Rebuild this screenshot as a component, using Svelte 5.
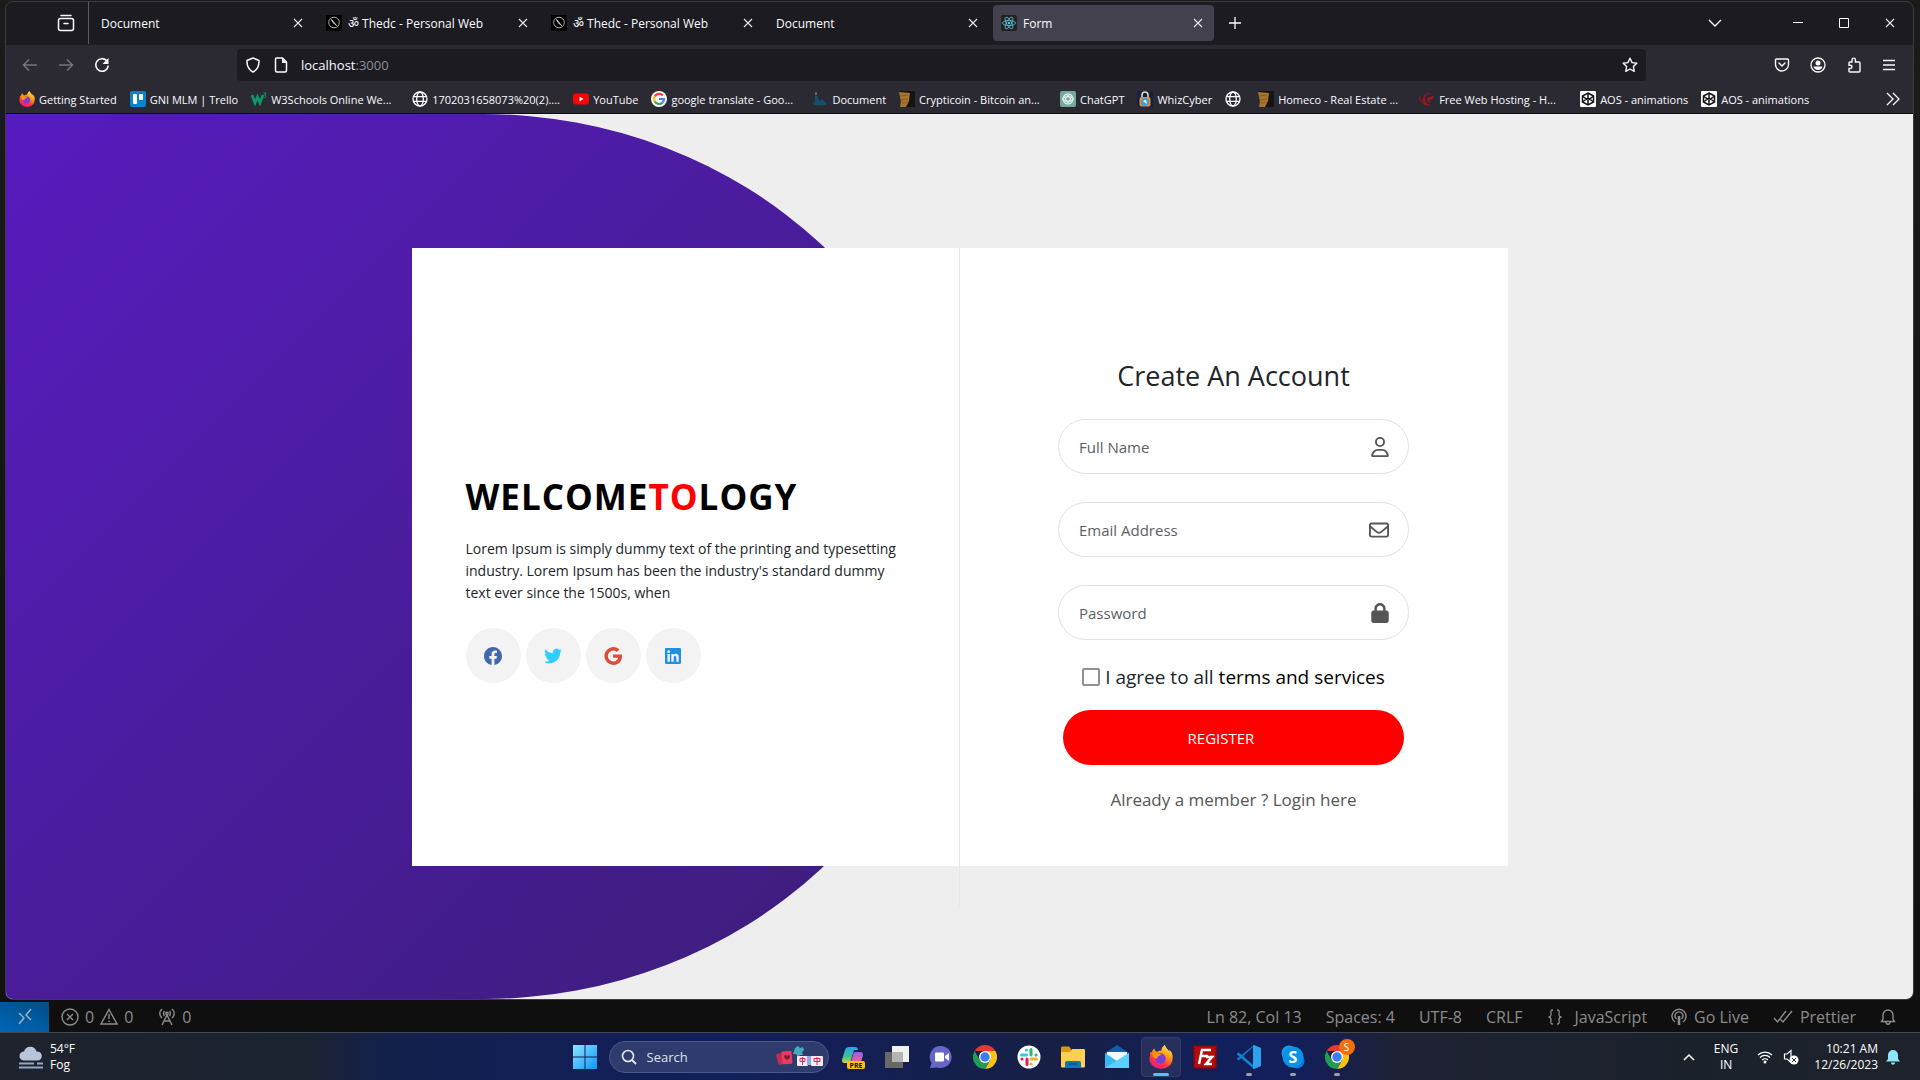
<script>
  const tabs = [
    { title: 'Document' },
    { title: 'Thedc - Personal Web', icon: 'compass', om: true },
    { title: 'Thedc - Personal Web', icon: 'compass', om: true },
    { title: 'Document' },
    { title: 'Form', icon: 'react', active: true },
  ];

  const bookmarks = [
    { label: 'Getting Started', icon: 'firefox' },
    { label: 'GNI MLM | Trello', icon: 'trello' },
    { label: 'W3Schools Online We...', icon: 'w3', long: true },
    { label: '1702031658073%20(2)....', icon: 'globe', long: true },
    { label: 'YouTube', icon: 'youtube' },
    { label: 'google translate - Goo...', icon: 'google', long: true },
    { label: 'Document', icon: 'boat' },
    { label: 'Crypticoin - Bitcoin an...', icon: 'wood', long: true },
    { label: 'ChatGPT', icon: 'gpt' },
    { label: 'WhizCyber', icon: 'padlock' },
    { label: '', icon: 'globe' },
    { label: 'Homeco - Real Estate ...', icon: 'wood', long: true },
    { label: 'Free Web Hosting - H...', icon: 'phoenix', long: true },
    { label: 'AOS - animations', icon: 'codepen' },
    { label: 'AOS - animations', icon: 'codepen' },
  ];

  const fields = [
    { id: 'name', label: 'Full Name', type: 'text', icon: 'user' },
    { id: 'email', label: 'Email Address', type: 'email', icon: 'mail' },
    { id: 'password', label: 'Password', type: 'password', icon: 'lock' },
  ];

  const socials = ['Facebook', 'Twitter', 'Google', 'LinkedIn'];

  const apps = [
    { name: 'Copilot' },
    { name: 'Task view' },
    { name: 'Teams' },
    { name: 'Chrome' },
    { name: 'Slack' },
    { name: 'Files' },
    { name: 'Mail' },
    { name: 'Firefox', active: true },
    { name: 'FileZilla' },
    { name: 'VS Code', running: true },
    { name: 'Skype', running: true },
    { name: 'Chrome S', running: true },
  ];
</script>

{#snippet firefox(size)}
  <svg width={size} height={size} viewBox="0 0 24 24" aria-hidden="true">
    <defs>
      <linearGradient id="fxg" x1="0.8" y1="0" x2="0.3" y2="1">
        <stop offset="0" stop-color="#fff44f" /><stop offset=".4" stop-color="#ff980e" /><stop offset=".7" stop-color="#ff3647" /><stop offset="1" stop-color="#e31587" />
      </linearGradient>
    </defs>
    <path fill="url(#fxg)" d="M23.4 9.500C22.800 7 20.700 5.400 19.700 4.600c.6 1 .9 2 .9 2.500C19.300 4.400 16.800 3 15.900 0c-3 1.700-3.500 4.600-3.500 5.700-2-.3-3.400.4-4.400 1C6.300 6.400 5.500 4.500 5.400 3.500 3.700 4.600 3.200 6.200 2.900 7.100 2.300 7 1.500 7.200 1 8c-.2 1.200 0 2 .2 2.500C.5 12 .4 13 .5 14a11.500 10 0 0 0 23 0c.2-1.800.2-3-.1-4.500z" />
    <circle cx="11.500" cy="13.500" r="5.200" fill="#7b3fd4" />
    <path fill="#ff980e" d="M3 8.500c3-1.800 5-.5 6.300.5l3 .3c-.3 1-2 1.700-3.300 2 0 1.500-2.200 3-3.500 1.700C4.400 12 3.500 10 3 8.500z" />
  </svg>
{/snippet}

{#snippet chrome(size)}
  <svg width={size} height={size} viewBox="0 0 24 24" aria-hidden="true">
    <path fill="#e33b2e" d="M1.600 6A12 12 0 0 1 22.400 6H12z" />
    <path fill="#fbc116" d="M22.400 6A12 12 0 0 1 12 24l5.200-9L12 6z" />
    <path fill="#1f9d55" d="M1.600 6A12 12 0 0 0 12 24l5.200-9-5.200 3-5.200-3z" />
    <circle cx="12" cy="12" r="6" fill="#fff" /><circle cx="12" cy="12" r="4.700" fill="#3b7ded" />
  </svg>
{/snippet}

{#snippet close()}
  <svg width="10" height="10" viewBox="0 0 10 10" aria-hidden="true"><path d="M1 1l8 8M9 1l-8 8" fill="none" stroke="#e8e8ee" stroke-width="1.100" /></svg>
{/snippet}

{#snippet smallIcon(name)}
  {#if name === 'firefox'}
    {@render firefox(16)}
  {:else}
    <svg width="16" height="16" viewBox="0 0 16 16" aria-hidden="true">
      {#if name === 'compass'}
        <rect width="16" height="16" fill="#000" /><circle cx="8" cy="7.500" r="5.300" fill="none" stroke="#aaa" /><path d="M5.500 4.500l5 6-3.500-3z" stroke="#ccc" fill="#ccc" />
      {:else if name === 'react'}
        <rect width="16" height="16" rx="2" fill="#222" />
        <g fill="none" stroke="#58c4dc" stroke-width=".8"><ellipse cx="8" cy="8" rx="6.500" ry="2.500" /><ellipse cx="8" cy="8" rx="6.500" ry="2.500" transform="rotate(60 8 8)" /><ellipse cx="8" cy="8" rx="6.500" ry="2.500" transform="rotate(120 8 8)" /></g>
        <circle cx="8" cy="8" r="1.300" fill="#58c4dc" />
      {:else if name === 'trello'}
        <rect width="16" height="16" rx="2" fill="#0b84d0" /><rect x="3" y="3" width="4" height="10" rx="1" fill="#fff" /><rect x="9" y="3" width="4" height="6" rx="1" fill="#fff" />
      {:else if name === 'w3'}
        <path d="M1 4l3 8L6.500 6 9 12l3-8" fill="none" stroke="#0d9c68" stroke-width="2.600" /><path d="M12.500 2h2.500l-1.500 2c2 0 2 3-.8 2.500" fill="none" stroke="#0d9c68" />
      {:else if name === 'globe'}
        <g fill="none" stroke="#fbfbfe" stroke-width="1.300"><circle cx="8" cy="8" r="7" /><ellipse cx="8" cy="8" rx="3.300" ry="7" /><path d="M1.500 5.700h13M1.500 10.300h13" /></g>
      {:else if name === 'youtube'}
        <rect y="2.500" width="16" height="11" rx="3" fill="#f00" /><path d="M6.500 5.500v5L10.500 8z" fill="#fff" />
      {:else if name === 'google'}
        <circle cx="8" cy="8" r="8" fill="#fff" />
        <g fill="none" stroke-width="2.200"><path d="M11.800 4.500A5 5 0 0 0 3.700 5.500" stroke="#ea4335" /><path d="M3.700 5.500a5 5 0 0 0 0 5" stroke="#fbbc05" /><path d="M3.700 10.500a5 5 0 0 0 7.800 1.100" stroke="#34a853" /><path d="M8 8h5a5 5 0 0 1-1.500 3.600" stroke="#4285f4" /></g>
      {:else if name === 'boat'}
        <path d="M3 2l3 4 1 4 3-2 5 5c-4 2-10 2-14 0l2-3z" fill="#12526a" /><circle cx="4" cy="2.500" r="1" fill="#c28b2c" />
      {:else if name === 'wood'}
        <path d="M0 0h16v16H4z" fill="#171310" /><path d="M0 1l11 1-1 8-3 6H1l1-5z" fill="#a8752f" /><path d="M1 5l8-1M2 9l7-1M3 12l6-1" stroke="#7d5420" stroke-width=".7" />
      {:else if name === 'gpt'}
        <rect width="16" height="16" rx="2" fill="#74aa9c" />
        <g fill="none" stroke="#fff" stroke-width=".8"><circle cx="8" cy="8" r="5.200" /><ellipse cx="8" cy="8" rx="2.200" ry="5" transform="rotate(30 8 8)" /><ellipse cx="8" cy="8" rx="2.200" ry="5" transform="rotate(90 8 8)" /><ellipse cx="8" cy="8" rx="2.200" ry="5" transform="rotate(150 8 8)" /></g>
      {:else if name === 'padlock'}
        <rect width="16" height="16" fill="#14213f" /><path d="M5 7V4a3 3 0 0 1 6 0v3" fill="none" stroke="#e8d9b0" stroke-width="1.600" /><rect x="2.500" y="6" width="11" height="9.500" rx="2" fill="#ee8a2f" /><circle cx="8" cy="11" r="4" fill="#39a0dc" /><path d="M6 10l4 3-1-4z" fill="#fff" />
      {:else if name === 'phoenix'}
        <path d="M14 3C9 2 5 5 6 9c.5 3 3 5 6 5-5 2-9-1-8.500-5C4 4 9 1 14 3zM8 8c2-3 5-2 7-3-1 3-3 4-5 4l2 2c-2 1-4-1-4-3zM1 4c0 4 1 6 3 8C1 11-1 8 1 4z" fill="#a8121b" />
      {:else if name === 'codepen'}
        <rect width="16" height="16" rx="1" fill="#fff" />
        <g fill="none" stroke="#111" stroke-width="1.500"><path d="M8 2l5.500 3v6L8 14l-5.500-3V5z" /><path d="M3 5.500l5 3.500 5-3.500M3 10.500L8 7l5 3.500M8 2v5M8 9v5" /></g>
      {/if}
    </svg>
  {/if}
{/snippet}

{#snippet fieldIcon(name)}
  {#if name === 'user'}
    <svg width="18" height="20" viewBox="0 0 448 512" aria-hidden="true"><path fill="#555" d="M304 128a80 80 0 1 0-160 0 80 80 0 1 0 160 0zm-208 0a128 128 0 1 1 256 0 128 128 0 1 1-256 0zM49.300 464h349.500c-8.900-63.300-63.300-112-129-112h-91.400c-65.700 0-120.100 48.700-129 112zM0 482.300C0 383.800 79.800 304 178.300 304h91.400C368.200 304 448 383.800 448 482.300c0 16.400-13.300 29.700-29.700 29.700H29.700C13.300 512 0 498.700 0 482.300z" /></svg>
  {:else if name === 'mail'}
    <svg width="20" height="20" viewBox="0 0 512 512" aria-hidden="true"><path fill="#555" d="M64 112c-8.800 0-16 7.200-16 16v22.100l172.500 141.600c20.700 17 50.400 17 71.100 0L464 150.100V128c0-8.800-7.200-16-16-16H64zM48 212.200V384c0 8.800 7.200 16 16 16h384c8.800 0 16-7.200 16-16V212.200L322 328.800c-38.400 31.500-93.700 31.500-132 0L48 212.200zM0 128c0-35.300 28.700-64 64-64h384c35.300 0 64 28.700 64 64v256c0 35.300-28.700 64-64 64H64c-35.300 0-64-28.700-64-64V128z" /></svg>
  {:else}
    <svg width="18" height="20" viewBox="0 0 448 512" aria-hidden="true"><path fill="#555" d="M144 144v48h160v-48c0-44.200-35.800-80-80-80s-80 35.800-80 80zM80 192v-48C80 64.500 144.500 0 224 0s144 64.500 144 144v48h16c35.300 0 64 28.700 64 64v192c0 35.300-28.700 64-64 64H64c-35.300 0-64-28.700-64-64V256c0-35.300 28.700-64 64-64h16z" /></svg>
  {/if}
{/snippet}

{#snippet socialIcon(name)}
  {#if name === 'Facebook'}
    <svg width="18" height="18" viewBox="0 0 24 24" aria-hidden="true"><path fill="#4267b2" d="M24 12.070C24 5.400 18.600 0 12 0S0 5.400 0 12.070C0 18.100 4.400 23.100 10.100 24v-8.400H7.100v-3.500h3V9.400c0-3 1.800-4.700 4.500-4.700 1.300 0 2.700.2 2.700.2v3h-1.500c-1.500 0-2 .9-2 1.900v2.300h3.400l-.5 3.500h-2.800V24C19.600 23.100 24 18.100 24 12.070z" /></svg>
  {:else if name === 'Twitter'}
    <svg width="18" height="18" viewBox="0 0 24 24" aria-hidden="true"><path fill="#33ccff" d="M24 4.600c-.9.400-1.800.7-2.800.8 1-.6 1.800-1.600 2.200-2.700-1 .6-2 1-3.100 1.200A4.900 4.900 0 0 0 11.900 8.400C7.700 8.100 4.100 6.100 1.700 3.100c-1.300 2.200-.7 5.100 1.500 6.600-.8 0-1.600-.2-2.200-.6-.1 2.300 1.600 4.400 3.900 4.900-.7.200-1.500.2-2.200.1.600 2 2.400 3.400 4.600 3.400A9.900 9.900 0 0 1 0 19.500 14 14 0 0 0 7.500 21.700c9.100 0 14.300-7.700 14-14.600 1-.7 1.800-1.600 2.500-2.500z" /></svg>
  {:else if name === 'Google'}
    <svg width="18" height="18" viewBox="0 0 24 24" aria-hidden="true"><path fill="#dd4b39" d="M12.200 10.100h11.500c.2.800.3 1.500.3 2.300 0 6.900-4.600 11.600-11.500 11.600A12 12 0 1 1 12.500 0c3.200 0 6 1.200 8.100 3.200l-3.700 3.500c-1-1-2.600-1.900-4.600-1.900a7.200 7.200 0 0 0 0 14.400c4 0 6.200-2.500 6.600-5h-6.700z" /></svg>
  {:else}
    <svg width="16" height="18" viewBox="0 0 448 448" aria-hidden="true"><path fill="#2090e0" d="M416 0H32C14 0 0 15 0 32v384c0 18 14 32 32 32h384c18 0 32-14 32-32V32c0-17-14-32-32-32zM135 384H69V170h66zM102 141a38 38 0 1 1 0-77 38 38 0 0 1 0 77zM384 384h-66V280c0-25-1-57-35-57s-40 27-40 55v106h-66V170h64v29h1c9-17 30-35 63-35 67 0 79 45 79 102z" /></svg>
  {/if}
{/snippet}

{#snippet appIcon(name)}
  {#if name === 'Firefox'}
    {@render firefox(24)}
  {:else if name === 'Chrome' || name === 'Chrome S'}
    {@render chrome(24)}
  {:else}
    <svg width="24" height="24" viewBox="0 0 24 24" aria-hidden="true">
      {#if name === 'Copilot'}
        <defs>
          <linearGradient id="cpa" x1="0" y1="0" x2="0" y2="1"><stop offset="0" stop-color="#2aa5f2" /><stop offset=".6" stop-color="#3dc08c" /><stop offset="1" stop-color="#d8d33c" /></linearGradient>
          <linearGradient id="cpb" x1="0" y1="0" x2="0" y2="1"><stop offset="0" stop-color="#9c5cf0" /><stop offset="1" stop-color="#f0608a" /></linearGradient>
        </defs>
        <path d="M8 2h6c2 0 2.500 1 3 3l-4 0-3 10c-.6 2-1.500 3-3.500 3H4c-3 0-3.500-2-2.500-5L4 5c.7-2 2-3 4-3z" fill="url(#cpa)" />
        <path d="M14 7h5c3 0 3.500 2 2.500 5l-1.500 5H10l2-7c.4-2 1-3 2-3z" fill="url(#cpb)" />
        <rect x="6" y="16" width="18" height="8" rx="2" fill="#ffc20e" /><text x="15" y="22.500" text-anchor="middle" font-size="7" font-weight="700" fill="#111">PRE</text>
      {:else if name === 'Task view'}
        <rect x="7" y="1" width="17" height="16" fill="#f1f1f1" /><rect y="7" width="18" height="16" fill="#686868" /><rect x="7" y="7" width="11" height="10" fill="#b4b4b4" />
      {:else if name === 'Teams'}
        <path d="M12.500 1a11 11 0 1 1-4 21.500L1 23l1.500-5A11 11 0 0 1 12.500 1z" fill="#6566c8" /><rect x="6" y="7.500" width="9" height="9" rx="1" fill="#fff" /><path d="M16 11l4-3v8l-4-3z" fill="#fff" />
      {:else if name === 'Slack'}
        <circle cx="12" cy="12" r="11.500" fill="#fff" />
        <g stroke-width="3" stroke-linecap="round"><path d="M9.500 5v.1M4.500 10H9.500" stroke="#36c5f0" /><path d="M14 4.500V10M19 10h.1" stroke="#2eb67d" /><path d="M14 14h5.500M14 19v.1" stroke="#ecb22e" /><path d="M10 14v5.500M5 14h.1" stroke="#e01e5a" /></g>
      {:else if name === 'Files'}
        <path d="M0 3c0-1 .5-1.500 1.500-1.500H8l2 2.500v4H0z" fill="#d99a0b" /><path d="M0 7h9l2-3h11.500c1 0 1.500.5 1.500 1.500V21c0 1-.5 1.500-1.500 1.500h-21C.5 22.500 0 22 0 21z" fill="#fdd155" /><path d="M4 23v-5c0-1.500 1-2 2-2h12c1 0 2 .5 2 2v5z" fill="#1673ba" /><path d="M8 19h8" stroke="#0b4c86" stroke-width="1.500" />
      {:else if name === 'Mail'}
        <path d="M0 8L12 0l12 8v15H0z" fill="#0f5faf" /><path d="M2 7h20v9H2z" fill="#f3f7fb" /><path d="M0 8l12 8L24 8v15H0z" fill="#38b9f2" /><path d="M0 23l24-15v15z" fill="#5bd0fa" />
      {:else if name === 'FileZilla'}
        <rect x="1" y="1" width="22" height="22" fill="#b30c0c" stroke="#8d0505" stroke-width="2" stroke-dasharray="2 1" /><path d="M6 19l3-14h9M8 11h7M13 12h6l-6 7h6" fill="none" stroke="#fff" stroke-width="2.500" />
      {:else if name === 'VS Code'}
        <path d="M17 1L4.500 13 1.500 15.500 0 14.500v-1L17 0z" fill="#1277be" /><path d="M0 8.500l1.500-1L5 10l12 11v3L0 9.500z" fill="#0f86d2" /><path d="M17 0l6 2.500c.7.300 1 .8 1 1.500v16c0 .7-.3 1.200-1 1.500L17 24c-1 0-1-.5-1-1V1c0-.5 0-1 1-1z" fill="#2ca2ee" />
      {:else if name === 'Skype'}
        <circle cx="8" cy="8" r="7.500" fill="#1b9bea" /><circle cx="16" cy="16" r="7.500" fill="#0a78d4" /><circle cx="12" cy="12" r="10.500" fill="#0a93e6" /><text x="12" y="18" text-anchor="middle" font-size="16" font-weight="700" fill="#fff">S</text>
      {/if}
    </svg>
  {/if}
{/snippet}

<div class="desktop">
  <div class="window">
    <div class="tabbar">
      <button class="archive" aria-label="Recent browsing">
        <svg width="18" height="18" viewBox="0 0 18 18" aria-hidden="true"><g fill="none" stroke="#fbfbfe" stroke-width="1.500" stroke-linecap="round"><path d="M4 1.500h10" /><rect x="1.500" y="4.500" width="15" height="12" rx="2" /><path d="M7 9.500h4" /></g></svg>
      </button>
      <div class="tabs">
        {#each tabs as tab}
          <div class="tab" class:active={tab.active}>
            {#if tab.icon}{@render smallIcon(tab.icon)}{/if}
            <span class="tab-title">{tab.om ? 'ॐ ' : ''}{tab.title}</span>
            <button aria-label="Close tab">{@render close()}</button>
          </div>
        {/each}
      </div>
      <button class="plus" aria-label="New tab"><svg width="14" height="14" viewBox="0 0 14 14" aria-hidden="true"><path d="M7 1v12M1 7h12" stroke="#fbfbfe" stroke-width="1.300" /></svg></button>
      <div class="window-controls">
        <button class="list" aria-label="List tabs"><svg width="14" height="10" viewBox="0 0 14 10" aria-hidden="true"><path d="M1 2l6 6 6-6" fill="none" stroke="#fbfbfe" stroke-width="1.400" /></svg></button>
        <button aria-label="Minimize"><svg width="10" height="10" viewBox="0 0 10 10" aria-hidden="true"><path d="M0 4.500h10" stroke="#fff" /></svg></button>
        <button aria-label="Maximize"><svg width="10" height="10" viewBox="0 0 10 10" aria-hidden="true"><path d="M.5.5h9v9h-9z" fill="none" stroke="#fff" /></svg></button>
        <button aria-label="Close window">{@render close()}</button>
      </div>
    </div>

    <div class="navbar">
      <div class="nav-buttons">
        <button aria-label="Back"><svg width="16" height="16" viewBox="0 0 16 16" aria-hidden="true"><path d="M15 8H1.500M7 2.500L1.500 8 7 13.500" fill="none" stroke="#77767e" stroke-width="1.400" /></svg></button>
        <button aria-label="Forward"><svg width="16" height="16" viewBox="0 0 16 16" aria-hidden="true"><path d="M1 8h13.500M9 2.500L14.500 8 9 13.500" fill="none" stroke="#77767e" stroke-width="1.400" /></svg></button>
        <button aria-label="Reload"><svg width="16" height="16" viewBox="0 0 16 16" aria-hidden="true"><path d="M14.300 8.500A6.300 6.300 0 1 1 12.500 3.500" fill="none" stroke="#fbfbfe" stroke-width="1.600" /><path d="M14.500 1v6h-6z" fill="#fbfbfe" /></svg></button>
      </div>
      <div class="urlbar">
        <svg width="16" height="16" viewBox="0 0 16 16" aria-hidden="true"><path d="M8 1l6 2.500C14.200 9 12 13 8 15 4 13 1.800 9 2 3.500z" fill="none" stroke="#fbfbfe" stroke-width="1.500" stroke-linejoin="round" /></svg>
        <svg width="16" height="16" viewBox="0 0 16 16" aria-hidden="true"><path d="M3.500 1h6l4 4v8.500c0 1-.5 1.500-1.500 1.500H4c-1 0-1.500-.5-1.500-1.500V2.500c0-1 .5-1.500 1-1.500z" fill="none" stroke="#fbfbfe" stroke-width="1.500" /><path d="M9 1v5h4.500z" fill="#fbfbfe" /></svg>
        <span class="url">localhost<span>:3000</span></span>
        <button aria-label="Bookmark this page"><svg width="16" height="16" viewBox="0 0 16 16" aria-hidden="true"><path d="M8 1.200l2.100 4.400 4.700.6-3.400 3.300.8 4.800L8 12l-4.200 2.300.8-4.800L1.200 6.200l4.700-.6z" fill="none" stroke="#fbfbfe" stroke-width="1.400" stroke-linejoin="round" /></svg></button>
      </div>
      <div class="nav-tools">
        <button aria-label="Pocket"><svg width="16" height="16" viewBox="0 0 16 16" aria-hidden="true"><path d="M2.500 2h11c.6 0 1 .4 1 1v4.500a6.500 6.500 0 0 1-13 0V3c0-.6.400-1 1-1zM5 6l3 3 3-3" fill="none" stroke="#fbfbfe" stroke-width="1.400" stroke-linecap="round" /></svg></button>
        <button aria-label="Account"><svg width="16" height="16" viewBox="0 0 16 16" aria-hidden="true"><circle cx="8" cy="8" r="7" fill="none" stroke="#fbfbfe" stroke-width="1.300" /><circle cx="8" cy="6" r="2.500" fill="#fbfbfe" /><path d="M3.500 9.500h9c-.5 2-2 3.500-4.500 3.500s-4-1.500-4.500-3.500z" fill="#fbfbfe" /></svg></button>
        <button aria-label="Extensions"><svg width="16" height="16" viewBox="0 0 16 16" aria-hidden="true"><path d="M6 5V2.800a1.700 1.700 0 0 1 3.400 0V5H13c.5 0 1 .4 1 1v8c0 .6-.5 1-1 1H4c-.6 0-1-.4-1-1v-2.500h1.300a1.600 1.600 0 0 0 0-3.300H3V6c0-.6.400-1 1-1z" fill="none" stroke="#fbfbfe" stroke-width="1.400" /></svg></button>
        <button aria-label="Menu"><svg width="14" height="14" viewBox="0 0 14 14" aria-hidden="true"><path d="M1 2.500h12M1 7h12M1 11.500h12" stroke="#fbfbfe" stroke-width="1.300" /></svg></button>
      </div>
    </div>

    <div class="bookmarks">
      {#each bookmarks as mark}
        <a href="#bookmark" class:long={mark.long} aria-label={mark.label || 'Bookmark'}>
          {@render smallIcon(mark.icon)}
          <span>{mark.label}</span>
        </a>
      {/each}
      <button aria-label="More bookmarks"><svg width="14" height="14" viewBox="0 0 14 14" aria-hidden="true"><path d="M1 1l6 6-6 6M7 1l6 6-6 6" fill="none" stroke="#fbfbfe" stroke-width="1.300" /></svg></button>
    </div>

    <main class="page">
      <div class="card">
        <section class="intro">
          <h1>WELCOME<span>TO</span>LOGY</h1>
          <p>Lorem Ipsum is simply dummy text of the printing and typesetting industry. Lorem Ipsum has been the industry's standard dummy text ever since the 1500s, when</p>
          <div class="socials">
            {#each socials as name}
              <a href="#social" aria-label={name}>{@render socialIcon(name)}</a>
            {/each}
          </div>
        </section>
        <section class="signup">
          <form>
            <h2>Create An Account</h2>
            {#each fields as field}
              <div class="field">
                <input id={field.id} type={field.type} placeholder={field.label} aria-label={field.label} />
                <label for={field.id}>{@render fieldIcon(field.icon)}</label>
              </div>
            {/each}
            <div class="agree">
              <input id="agree" type="checkbox" />
              <label for="agree">I agree to all <a href="#terms">terms and services</a></label>
            </div>
            <button type="button" class="register">REGISTER</button>
            <p class="login">Already a member ? <a href="#login">Login here</a></p>
          </form>
        </section>
      </div>
    </main>
  </div>

  <div class="statusbar">
    <button class="remote" aria-label="Remote"><svg width="14" height="18" viewBox="0 0 14 18" aria-hidden="true"><path d="M1 5l5 5-5 6M13 1L8 7l5 5" fill="none" stroke="#9fb6c8" stroke-width="1.400" /></svg></button>
    <div class="problems">
      <svg width="18" height="18" viewBox="0 0 18 18" aria-hidden="true"><g fill="none" stroke="#8c8c8c" stroke-width="1.400"><circle cx="9" cy="9" r="8" /><path d="M6 6l6 6M12 6l-6 6" /></g></svg>
      <span>0</span>
      <svg width="18" height="18" viewBox="0 0 18 18" aria-hidden="true"><path d="M9 1.500L17 16H1zM9 6v5M9 12.500v1.500" fill="none" stroke="#8c8c8c" stroke-width="1.400" /></svg>
      <span>0</span>
    </div>
    <div class="ports">
      <svg width="18" height="18" viewBox="0 0 18 18" aria-hidden="true"><g fill="none" stroke="#8c8c8c" stroke-width="1.400"><path d="M4 17L9 7l5 10M6 13h6M4 1C1 4 1 7 4 10M14 1c3 3 3 6 0 9M6.500 3c-1.500 2-1.500 3 0 5M11.500 3c1.500 2 1.500 3 0 5" /><circle cx="9" cy="5.500" r="1.200" /></g></svg>
      <span>0</span>
    </div>
    <div class="status-right">
      <span>Ln 82, Col 13</span>
      <span>Spaces: 4</span>
      <span>UTF-8</span>
      <span>CRLF</span>
      <span class="lang"><svg width="16" height="16" viewBox="0 0 16 16" aria-hidden="true"><path d="M6 1C3 1 4 3 4 5s-.5 3-2.500 3C3.500 8 4 9 4 11s-1 4 2 4M10 1c3 0 2 2 2 4s.5 3 2.500 3c-2 0-2.500 1-2.500 3s1 4-2 4" fill="none" stroke="#8c8c8c" stroke-width="1.300" /></svg>JavaScript</span>
      <span class="with-icon"><svg width="16" height="18" viewBox="0 0 16 18" aria-hidden="true"><g fill="none" stroke="#8c8c8c" stroke-width="1.400"><path d="M4 14a7 7 0 1 1 8 0M5.500 11a4 4 0 1 1 5 0" /><path d="M8 8v9" stroke-width="2.600" /></g></svg>Go Live</span>
      <span class="with-icon"><svg width="20" height="14" viewBox="0 0 20 14" aria-hidden="true"><path d="M1 8l3.500 4L13 1M7.500 9.500L10 12l9-11" fill="none" stroke="#8c8c8c" stroke-width="1.400" /></svg>Prettier</span>
      <button aria-label="Notifications"><svg width="16" height="18" viewBox="0 0 16 18" aria-hidden="true"><path d="M1.500 13.500h13L13 11V7A5 5 0 0 0 3 7v4zM6 14c0 3 4 3 4 0" fill="none" stroke="#8c8c8c" stroke-width="1.400" /></svg></button>
    </div>
  </div>

  <div class="taskbar">
    <button class="weather">
      <svg width="24" height="24" viewBox="0 0 24 24" aria-hidden="true"><path d="M5 15.500a4.500 4.500 0 0 1 0-9 6.500 6.500 0 0 1 12.500 0 4.500 4.500 0 0 1 1.500 9z" fill="#b9c5dc" /><path d="M0 18.500h15M18 18.500h6M0 22.500h24" stroke="#94a8c8" stroke-width="2" /></svg>
      <span><b>54°F</b><br />Fog</span>
    </button>
    <div class="dock">
      <button aria-label="Start"><svg width="24" height="24" viewBox="0 0 24 24" aria-hidden="true"><defs><linearGradient id="win" x1="0" y1="0" x2="1" y2="1"><stop offset="0" stop-color="#8ee4ff" /><stop offset="1" stop-color="#0a98f7" /></linearGradient></defs><path d="M0 0h11.500v11.500H0zM12.500 0H24v11.500H12.500zM0 12.500h11.500V24H0zM12.500 12.500H24V24H12.500z" fill="url(#win)" /></svg></button>
      <label class="search">
        <svg width="16" height="16" viewBox="0 0 16 16" aria-hidden="true"><circle cx="7" cy="7" r="5.500" fill="none" stroke="#e8eaf2" stroke-width="1.600" /><path d="M11 11l4 4" stroke="#e8eaf2" stroke-width="1.800" /></svg>
        <input type="text" placeholder="Search" aria-label="Search" />
        <svg width="48" height="24" viewBox="0 0 48 24" aria-hidden="true"><rect x="1" y="8" width="10" height="11" rx="1" fill="#c92a50" transform="rotate(-15 6 13)" /><rect x="6" y="6" width="10" height="13" rx="1" fill="#e43d62" transform="rotate(-5 11 13)" /><path d="M8 11c1-2 3 0 3 0s2-2 3 0-3 4-3 4-3-2-3-4z" fill="#8c1536" /><path d="M19 3l3-2 2 2 3-1 1 3-2 2 1 3-3 0-2 2-2-3-3 0z" fill="#45a9b8" /><rect x="21" y="11" width="11" height="10" rx="1" fill="#f3eef6" /><rect x="31" y="11" width="5" height="9" fill="#8fa4ea" /><rect x="35" y="11" width="12" height="10" rx="1" fill="#f3eef6" /><path d="M24 13.500h5v3h-5zM26.500 12v8M38 13.500h6v3h-6zM41 12v8" fill="none" stroke="#e0245a" /></svg>
      </label>
      {#each apps as app}
        <button class="app" class:active={app.active} class:running={app.running} aria-label={app.name}>
          {@render appIcon(app.name)}
          {#if app.name === 'Chrome S'}<span class="badge">S</span>{/if}
        </button>
      {/each}
    </div>
    <div class="tray">
      <button aria-label="Show hidden icons"><svg width="12" height="8" viewBox="0 0 12 8" aria-hidden="true"><path d="M1 7l5-5 5 5" fill="none" stroke="#fff" stroke-width="1.500" /></svg></button>
      <span class="language">ENG<br />IN</span>
      <span class="net">
        <svg width="16" height="14" viewBox="0 0 16 14" aria-hidden="true"><g fill="none" stroke="#fff" stroke-width="1.300"><path d="M1 5a10 10 0 0 1 14 0M3 7.500a7 7 0 0 1 10 0M5.200 10a4 4 0 0 1 5.600 0" /></g><circle cx="8" cy="12" r="1.500" fill="#fff" /></svg>
        <svg width="16" height="16" viewBox="0 0 16 16" aria-hidden="true"><path d="M1.500 5h2.500l4-3.500v12L4 10H1.500z" fill="none" stroke="#fff" stroke-width="1.200" /><circle cx="11" cy="11" r="4.500" fill="#fff" /><path d="M9 9l4 4M13 9l-4 4" stroke="#222" /></svg>
      </span>
      <span class="clock">10:21 AM<br />12/26/2023</span>
      <button aria-label="Notifications"><svg width="14" height="16" viewBox="0 0 14 16" aria-hidden="true"><path d="M0 12.500L2 10V6a5 5 0 0 1 10 0v4l2 2.500zM5 13.500h4c0 3-4 3-4 0z" fill="#8fe6fb" /></svg></button>
    </div>
  </div>
</div>

<style>
  :global(body) {
    margin: 0;
    background: #141414;
  }
  .desktop {
    min-height: 100vh;
    display: flex;
    flex-direction: column;
    font-family: 'Open Sans', 'Noto Sans', sans-serif;
    background: linear-gradient(#1b1b1b, #101010);
  }
  .desktop *,
  .desktop *::before {
    box-sizing: border-box;
  }
  svg {
    display: block;
    flex: none;
  }
  button {
    display: grid;
    place-items: center;
    padding: 0;
    border: 0;
    background: none;
    color: inherit;
    font: inherit;
  }
  a {
    color: inherit;
    text-decoration: none;
  }

  .window {
    flex: 1;
    display: flex;
    flex-direction: column;
    margin: 1px 6px 1px 5px;
    border: 1px solid #3c3c40;
    border-radius: 8px;
    overflow: hidden;
    background: #2b2a33;
    color: #fbfbfe;
  }
  .tabbar {
    display: flex;
    align-items: center;
    height: 43px;
    padding-bottom: 1px;
    background: #1c1b22;
    font-size: 12px;
  }
  .archive {
    align-self: stretch;
    width: 83px;
    padding-left: 38px;
    border-right: 1px solid #5b5b66;
  }
  .tabs {
    display: flex;
    gap: 4px;
    padding-left: 4px;
  }
  .tab {
    display: flex;
    align-items: center;
    gap: 6px;
    width: 221px;
    height: 36px;
    padding: 0 8px;
    border-radius: 4px;
  }
  .tab.active {
    background: #42414d;
  }
  .tab-title {
    flex: 1;
    white-space: nowrap;
  }
  .tab button {
    width: 16px;
    height: 16px;
  }
  .plus {
    width: 42px;
    height: 36px;
  }
  .window-controls {
    display: flex;
    align-items: center;
    margin-left: auto;
  }
  .window-controls button {
    width: 46px;
    height: 40px;
  }
  .window-controls .list {
    margin-right: 37px;
  }

  .navbar {
    display: flex;
    align-items: center;
    height: 40px;
  }
  .nav-buttons {
    display: flex;
    gap: 20px;
    width: 231px;
    padding-left: 16px;
  }
  .urlbar {
    flex: 1;
    display: flex;
    align-items: center;
    gap: 12px;
    height: 32px;
    padding: 0 8px;
    border-radius: 4px;
    background: #1c1b22;
    font-size: 13px;
  }
  .url {
    flex: 1;
  }
  .url span {
    color: #8f8f98;
  }
  .nav-tools {
    display: flex;
    justify-content: flex-end;
    gap: 20px;
    width: 267px;
    padding-right: 17px;
  }

  .bookmarks {
    display: flex;
    align-items: center;
    gap: 13px;
    height: 29px;
    padding: 0 13px;
    border-bottom: 1px solid #0c0c0d;
    font-size: 11px;
    white-space: nowrap;
  }
  .bookmarks a {
    display: flex;
    align-items: center;
    gap: 4px;
    height: 20px;
  }
  .bookmarks .long {
    width: 148px;
  }
  .bookmarks button {
    margin-left: auto;
  }

  .page {
    flex: 1;
    position: relative;
    display: grid;
    place-items: center;
    background: #eee;
    color: #212529;
  }
  .page::before {
    content: '';
    position: absolute;
    inset: 0 50% 0 0;
    border-radius: 0 50% 50% 0;
    background: linear-gradient(-45deg, #3b1e75, #571bbf);
  }
  .card {
    position: relative;
    display: grid;
    grid-template-columns: 1fr 1fr;
    width: min(1096px, 90%);
    min-height: 618px;
    background: #fff;
  }
  .intro {
    display: flex;
    flex-direction: column;
    justify-content: center;
    padding: 46px 54px 0;
  }
  h1 {
    margin: 0;
    color: #000;
    font-size: 35px;
    font-weight: 700;
    line-height: 42px;
    letter-spacing: 1px;
  }
  h1 span {
    color: #f00;
  }
  .intro p {
    margin: 20px 0 24px;
    font-size: 14px;
    line-height: 22px;
  }
  .socials {
    display: flex;
    gap: 5px;
  }
  .socials a {
    display: grid;
    place-items: center;
    width: 55px;
    height: 55px;
    border-radius: 50%;
    background: #f3f3f3;
  }
  .signup {
    position: relative;
    display: grid;
    place-items: center;
    padding-top: 58px;
  }
  .signup::before {
    content: '';
    position: absolute;
    inset: 0 auto -40px -1px;
    border-left: 1px solid #e6e6e6;
  }
  form {
    display: flex;
    flex-direction: column;
    width: 351px;
    text-align: center;
  }
  h2 {
    margin: 0 0 26px;
    font-size: 27px;
    font-weight: 400;
    line-height: 34px;
  }
  .field {
    display: flex;
    align-items: center;
    height: 55px;
    margin-bottom: 28px;
    padding: 0 19px 0 20px;
    border: 1px solid #dee2e6;
    border-radius: 28px;
  }
  .field input {
    flex: 1;
    min-width: 0;
    padding: 0;
    border: 0;
    outline: 0;
    background: none;
    font: inherit;
    font-size: 15px;
  }
  .field input::placeholder {
    color: #5c6066;
    opacity: 1;
  }
  .agree {
    display: flex;
    align-items: center;
    justify-content: center;
    gap: 5px;
    margin-bottom: 18px;
    margin-top: -6px;
    font-size: 19px;
    line-height: 30px;
  }
  .agree input {
    appearance: none;
    width: 18px;
    height: 18px;
    margin: 0;
    border: 2px solid #8f8f9d;
    border-radius: 2px;
    background: #fff;
  }
  .agree a {
    color: #000;
  }
  .register {
    height: 55px;
    margin: 0 5px 23px;
    padding-right: 25px;
    border-radius: 28px;
    background: #f00;
    color: #fff;
    font-size: 15px;
  }
  .login {
    margin: 0;
    color: #555;
    font-size: 17px;
    line-height: 24px;
  }

  .statusbar {
    display: flex;
    align-items: center;
    height: 31px;
    padding-top: 1px;
    background: #0f0f0f;
    color: #8c8c8c;
    font-size: 16px;
  }
  .remote {
    align-self: stretch;
    width: 49px;
    background: linear-gradient(20deg, #0067b8, #004c87);
  }
  .problems,
  .ports {
    display: flex;
    align-items: center;
    gap: 6px;
    padding-left: 12px;
  }
  .ports {
    padding-left: 25px;
  }
  .status-right {
    display: flex;
    align-items: center;
    gap: 24px;
    margin-left: auto;
    padding-right: 24px;
  }
  .lang,
  .with-icon {
    display: flex;
    align-items: center;
    gap: 7px;
  }
  .lang {
    gap: 12px;
  }

  .taskbar {
    display: grid;
    grid-template-columns: 1fr auto 1fr;
    align-items: center;
    height: 48px;
    border-top: 1px solid #43474f;
    background: linear-gradient(90deg, #1e232d 0%, #1b2230 16%, #12204c 20%, #111f5c 38%, #171f45 55%, #111f5c 64%, #131e58 68%, #1e2233 73%, #1b212b 88%, #1d222b 100%);
    color: #fff;
    font-size: 12px;
    line-height: 16px;
  }
  .weather {
    display: flex;
    align-items: center;
    gap: 7px;
    padding-left: 19px;
    text-align: left;
  }
  .weather b {
    font-weight: 400;
  }
  .dock {
    display: flex;
    align-items: center;
    gap: 4px;
    padding-left: 1px;
  }
  .dock > button {
    width: 40px;
    height: 40px;
    border-radius: 4px;
  }
  .search {
    display: flex;
    align-items: center;
    gap: 10px;
    width: 220px;
    height: 32px;
    padding: 0 4px 0 11px;
    border: 1px solid #4c5888;
    border-radius: 16px;
    background: #2e3b6c;
  }
  .search input {
    flex: 1;
    min-width: 0;
    padding: 0;
    border: 0;
    outline: 0;
    background: none;
    font: inherit;
    font-size: 13px;
  }
  .search input::placeholder {
    color: #dfe2ee;
    opacity: 1;
  }
  .app {
    position: relative;
  }
  .app.active {
    background: #262f5c;
    border: 1px solid #343c66;
  }
  .app.active::before,
  .app.running::before {
    content: '';
    position: absolute;
    bottom: 1px;
    width: 6px;
    height: 3px;
    border-radius: 2px;
    background: #9a9dab;
  }
  .app.active::before {
    bottom: 0;
    width: 16px;
    background: #4cc2ff;
  }
  .badge {
    position: absolute;
    top: 2px;
    right: 2px;
    width: 16px;
    height: 16px;
    border-radius: 50%;
    background: #f2700c;
    font-size: 10px;
    line-height: 16px;
  }
  .tray {
    display: flex;
    align-items: center;
    justify-content: flex-end;
    padding-right: 20px;
    text-align: right;
  }
  .language {
    margin: 0 19px 0 19px;
    text-align: center;
  }
  .net {
    display: flex;
    align-items: center;
    gap: 10px;
    margin-right: 15px;
  }
  .clock {
    margin-right: 8px;
  }
</style>
